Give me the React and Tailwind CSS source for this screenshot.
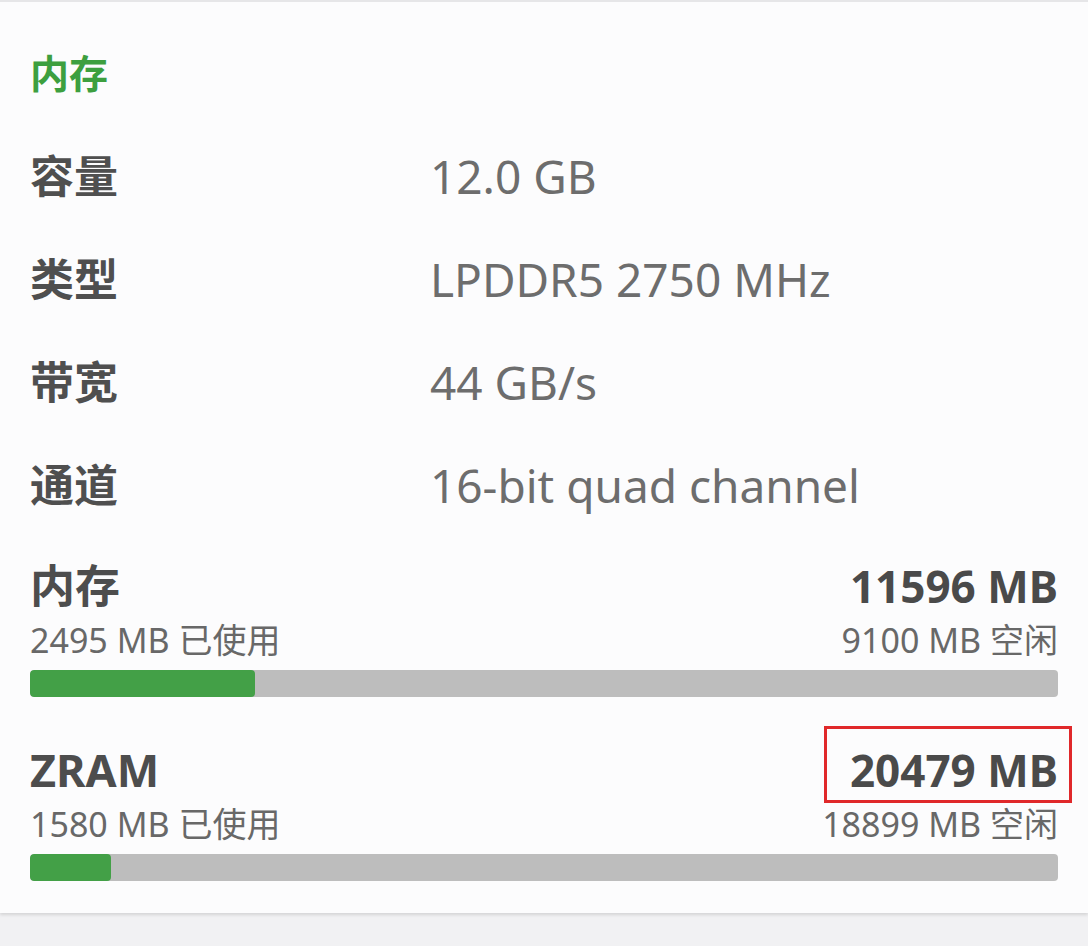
import React from 'react';

const font = { fontFamily: '"Noto Sans", "Noto Sans CJK SC", sans-serif' };

const specs = [
  ['容量', '12.0 GB'],
  ['类型', 'LPDDR5 2750 MHz'],
  ['带宽', '44 GB/s'],
  ['通道', '16-bit quad channel'],
];

const Usage = ({ name, total, used, free, pct, boxed }) => (
  <div className="flex flex-col">
    <div className="flex h-[50px] items-center justify-between leading-[50px]">
      <span className="text-[45px] font-bold text-[#4d4d4d]">{name}</span>
      {boxed ? (
        <span className="-mt-[19px] -mb-[8px] -mr-[14px] border-[3px] border-[#e0282a] pt-[16px] pb-[5px] pl-[23px] pr-[11px] text-[44px] font-bold text-[#4a4a4a]">
          {total}
        </span>
      ) : (
        <span className="text-[44px] font-bold text-[#4a4a4a]">{total}</span>
      )}
    </div>
    <div className="mt-[9px] flex h-[40px] items-center justify-between text-[34px] leading-[40px] text-[#686868]">
      <span>{used} 已使用</span>
      <span>{free} 空闲</span>
    </div>
    <div className="mt-[10px] h-[27px] w-full overflow-hidden rounded-[4px] bg-[#bdbdbd]">
      <div className="h-full rounded-[4px] bg-[#43a047]" style={{ width: pct }} />
    </div>
  </div>
);

export default function App() {
  return (
    <div className="min-h-[946px] w-[1088px] bg-[#f1f1f3]" style={font}>
      <div className="border-t-2 border-[#e6e6e8] bg-[#fcfcfd] px-[30px] pb-[32px] shadow-[0_2px_3px_rgba(0,0,0,0.12)]">
        <div className="flex h-[122px] items-center pt-[18px] text-[39px] leading-none font-bold text-[#3d9f3f]">
          内存
        </div>
        {specs.map(([k, v]) => (
          <div key={k} className="flex h-[103px] items-center leading-none">
            <span className="w-[400px] text-[44px] font-bold text-[#4f4f4f]">{k}</span>
            <span className="text-[46px] text-[#6d6d6d]">{v}</span>
          </div>
        ))}
        <div className="mt-[25px]">
          <Usage name="内存" total="11596 MB" used="2495 MB" free="9100 MB" pct="21.9%" />
        </div>
        <div className="mt-[48px]">
          <Usage name="ZRAM" total="20479 MB" used="1580 MB" free="18899 MB" pct="7.9%" boxed />
        </div>
      </div>
    </div>
  );
}
